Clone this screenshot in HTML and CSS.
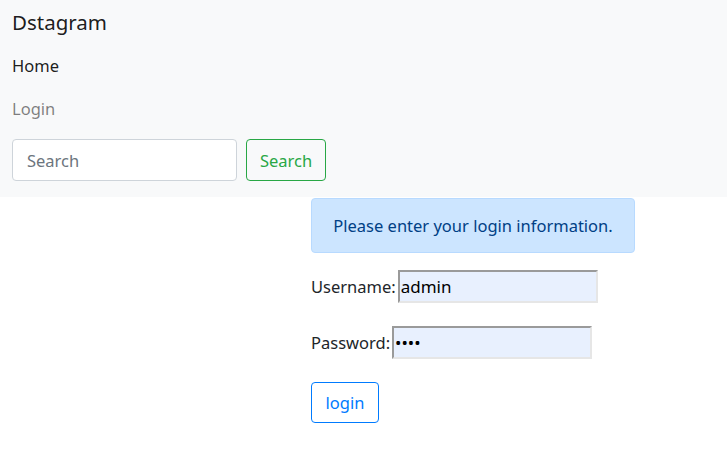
FILE: index.html
```html
<!DOCTYPE html>
<html lang="en">
<head>
<meta charset="utf-8">
<title>Dstagram</title>
<link rel="stylesheet" href="styles.css">
</head>
<body>
<nav class="navbar">
  <a class="brand" href="#">Dstagram</a>
  <ul class="nav">
    <li><a class="nav-link active" href="#">Home</a></li>
    <li><a class="nav-link" href="#">Login</a></li>
  </ul>
  <form class="search">
    <input class="search-input" type="search" placeholder="Search">
    <button class="search-btn" type="button">Search</button>
  </form>
</nav>
<main class="main">
  <div class="alert">Please enter your login information.</div>
  <form class="login-form">
    <div class="row"><label class="label">Username:</label><input class="field" type="text" value="admin"></div>
    <div class="row"><label class="label">Password:</label><input class="field" type="password" value="1234"></div>
    <button class="login-btn" type="button">login</button>
  </form>
</main>
</body>
</html>
```
FILE: styles.css
```css
* { box-sizing: border-box; }
body {
  margin: 0;
  font-family: "Noto Sans", "Open Sans", sans-serif;
  font-size: 16.5px;
  color: #212529;
  background: #fff;
}
.navbar {
  background: #f8f9fa;
  padding: 6px 12px 16px;
  display: flex;
  flex-direction: column;
  align-items: flex-start;
}
.brand {
  font-size: 20.5px;
  line-height: 33px;
  color: rgba(0,0,0,.9);
  text-decoration: none;
  padding-bottom: 5px;
}
.nav {
  list-style: none;
  margin: 0;
  padding: 0;
}
.nav-link {
  display: block;
  line-height: 26px;
  padding: 8.5px 0;
  color: rgba(0,0,0,.5);
  text-decoration: none;
}
.nav-link.active { color: rgba(0,0,0,.9); }
.search {
  display: flex;
  gap: 9px;
  margin-top: 9px;
}
.search-input {
  width: 225px;
  height: 42px;
  border: 1px solid #ced4da;
  border-radius: 4px;
  padding: 0 14px;
  font: inherit;
  color: #495057;
  background: #fff;
}
.search-input::placeholder { color: #6c757d; }
.search-btn {
  width: 80px;
  height: 42px;
  border: 1px solid #28a745;
  border-radius: 4px;
  background: transparent;
  color: #28a745;
  font: inherit;
  padding: 0;
}
.main {
  padding-left: 311px;
  padding-top: 1px;
}
.alert {
  width: 324px;
  height: 55px;
  background: #cce5ff;
  border: 1px solid #b8daff;
  border-radius: 4px;
  color: #004085;
  display: flex;
  align-items: center;
  justify-content: center;
}
.login-form {
  display: flex;
  flex-direction: column;
  align-items: flex-start;
  padding-top: 17px;
  gap: 23px;
}
.row {
  display: flex;
  align-items: center;
  gap: 2px;
}
.label { color: #212529; }
.field {
  width: 200px;
  height: 33px;
  border-width: 2px;
  border-style: solid;
  border-color: #9a9a9a #e6e6e6 #e6e6e6 #9a9a9a;
  background: #e8f0fe;
  font-family: "Noto Sans", sans-serif;
  font-size: 17px;
  padding: 0 1px;
  color: #000;
}
.login-btn {
  width: 68px;
  height: 41px;
  border: 1px solid #007bff;
  border-radius: 4px;
  background: #fff;
  color: #007bff;
  font: inherit;
  padding: 0;
}
```
